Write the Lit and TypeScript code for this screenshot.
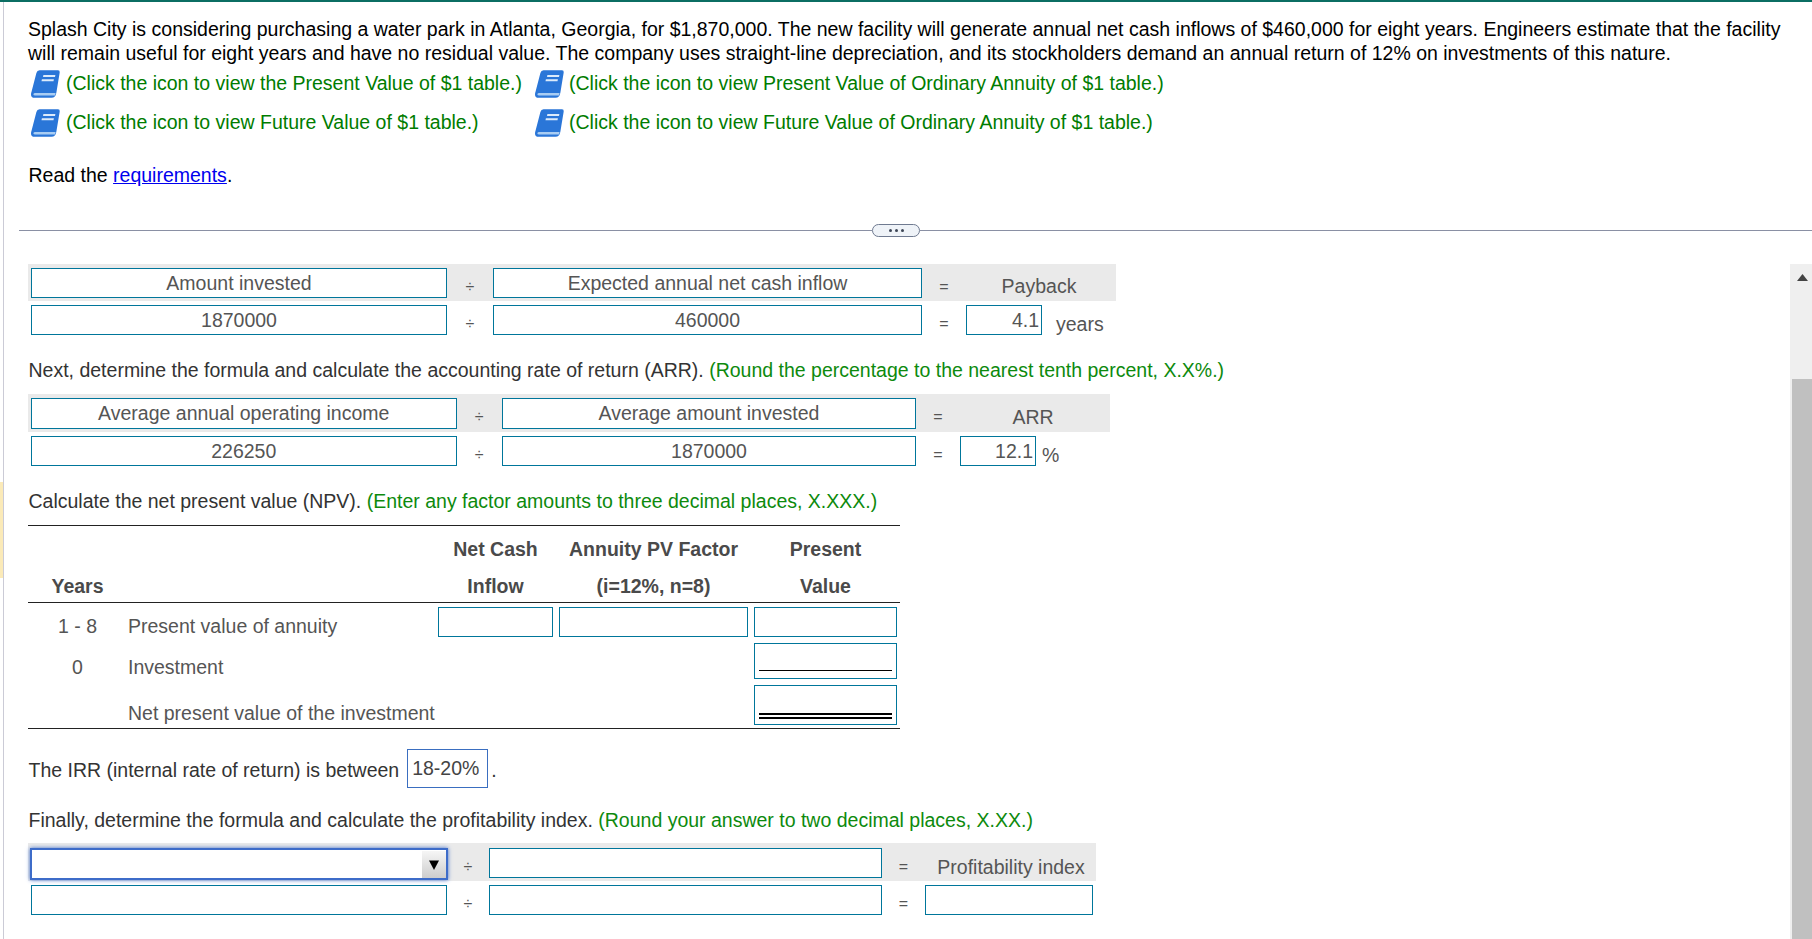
import { LitElement, html, css, svg } from "lit";
import { customElement } from "lit/decorators.js";

const bookIcon = svg`<svg class="book" viewBox="0 0 29 28" width="29" height="28" aria-hidden="true">
  <path d="M8.5 0.3 H27 Q29 0.3 28.7 2.4 L25.4 22.5 Q24.6 27.8 20.5 27.8 H3.6 Q0 27.8 0 24.4 Q0 23 0.6 21.6 L5.4 3 Q6.1 0.3 8.5 0.3 Z" fill="#2a76d8"/>
  <path d="M2.4 24.4 Q2.4 23 4.2 23 H24.6 L24 25.4 H4.2 Q2.4 25.4 2.4 24.4 Z" fill="#a9cdf3"/>
  <path d="M12.4 5 H24.4 L24 6.9 H12 Z M10.9 9.3 H22.9 L22.5 11.2 H10.5 Z" fill="#dcebfb"/>
</svg>`;

@customElement("app-root")
export class AppRoot extends LitElement {
  static styles = css`
    :host {
      display: block;
      position: relative;
      width: 1812px;
      height: 939px;
      overflow: hidden;
      background: #fff;
      font-family: "Liberation Sans", Arial, sans-serif;
      font-size: 19.5px;
      line-height: 24px;
      color: #222;
    }
    .topbar { height: 2px; background: #0b6e63; }
    .page {
      height: 937px;
      box-sizing: border-box;
      margin-left: 3px;
      border-left: 1px solid #cbcbd6;
      padding: 15px 0 0 24px;
    }
    .accent {
      position: absolute;
      left: 0;
      top: 482px;
      width: 3px;
      height: 96px;
      background: #fbeab8;
    }
    .intro { margin: 0; color: #000; width: 1770px; }
    .links {
      display: grid;
      grid-template-columns: 504px auto;
      row-gap: 11px;
      margin-top: 5px;
      padding-left: 3px;
      justify-content: start;
      color: #007c00;
    }
    .link { display: flex; align-items: center; gap: 6px; height: 28px; }
    .link span { padding-bottom: 2px; }
    .link.second { gap: 5px; }
    .book { flex: none; }
    .read { margin: 26px 0 0; padding-left: 0.5px; color: #000; }
    .read a { color: #0000ee; text-decoration: underline; }

    .divider { display: flex; align-items: center; margin: 37px 0 0 -9px; height: 13px; }
    .divider .line { flex: 1; height: 1px; background: #8a90a4; }
    .divider .line.lead { flex: none; width: 853px; }
    .pill {
      width: 48px;
      height: 13px;
      box-sizing: border-box;
      border: 1px solid #6f7a90;
      border-radius: 7px;
      background: #eff3f8;
      display: flex;
      align-items: center;
      justify-content: center;
      gap: 3px;
    }
    .pill i { width: 3px; height: 3px; border-radius: 50%; background: #3d4656; }

    .formula { color: #555; }
    .f1 { --cols: 416px 46px 429px 44px 1fr; width: 1088px; margin-top: 27px; }
    .f2 { --cols: 425.5px 45.5px 414px 44px 1fr; width: 1082px; margin-top: 12px; }
    .f3 { --cols: 416px 42px 393px 43px 168px; width: 1068px; margin-top: 11px; }
    .frow {
      display: grid;
      grid-template-columns: var(--cols);
      padding-left: 3px;
      box-sizing: border-box;
      align-items: start;
    }
    .frow.head { background: #eaeaea; padding-top: 4px; padding-bottom: 3px; }
    .f3 .frow.head { padding-top: 5px; padding-bottom: 1px; }
    .frow.vals { margin-top: 4px; }
    .f2 .frow.head .box { height: 31px; }
    .box {
      box-sizing: border-box;
      height: 30px;
      border: 1px solid #00769b;
      background: #fff;
      text-align: center;
      line-height: 28px;
      color: #555;
    }
    .box.num { text-align: right; padding-right: 2px; width: 76px; }
    .f3 .result { width: 168px; }
    .op { text-align: center; font-size: 16px; height: 30px; line-height: 38px; color: #555; }
    .rhead { text-align: center; height: 30px; line-height: 30px; padding: 4px 4px 0 0; box-sizing: border-box; }
    .f1 .rhead { padding-top: 3px; }
    .f3 .rhead { padding: 4px 0 0 4px; }
    .resultcell { display: flex; align-items: flex-start; }
    .unit { height: 30px; line-height: 38px; margin-left: 14px; }
    .unit.pct { margin-left: 6px; }

    .text { margin: 23px 0 0; padding-left: 0.5px; color: #333; }
    .text.calc { margin-top: 23px; }
    .tip { color: #0d8a0d; }

    .npv {
      --cols: 101px 309px 121px 195px 146px;
      width: 872px;
      margin-top: 12px;
      color: #555;
      border-top: 1px solid #222;
      border-bottom: 1px solid #222;
    }
    .npvhead, .npvbody { display: grid; grid-template-columns: var(--cols); }
    .npvhead {
      padding: 11px 0 4px;
      row-gap: 13px;
      border-bottom: 1px solid #222;
      font-weight: bold;
      color: #4a4a4a;
      text-align: center;
    }
    .npvhead .c1 { padding-right: 2px; }
    .npvhead .c3, .npvhead .c4 { padding-right: 6px; }
    .npvhead .c5 { padding-right: 3px; }
    .npvbody { padding: 4px 0 3px; row-gap: 6px; align-items: end; }
    .yr { text-align: center; padding-right: 2px; }
    .label { margin-left: -1px; }
    .first { transform: translateY(1px); }
    .npvbody .box.c3 { width: 115px; }
    .npvbody .box.c4 { width: 189px; }
    .npvbody .box.c5 { width: 143px; }
    .lined {
      display: flex;
      flex-direction: column;
      justify-content: flex-end;
      padding: 0 4px 7px;
    }
    .lined.single { height: 36px; }
    .lined.double { height: 40px; padding-bottom: 5px; }
    .lined span { display: block; }
    .lined.single span { border-bottom: 1px solid #000; }
    .lined.double span { border-bottom: 6px double #000; }
    .skip { grid-column: span 2; }

    .irr { display: flex; align-items: center; margin-top: 20px; padding-left: 0.5px; color: #333; height: 39px; }
    .irr > span { padding-top: 2px; }
    .irrbox {
      margin-left: 8px;
      height: 39px;
      box-sizing: border-box;
      width: 81px;
      padding: 0 0 0 4px;
      border: 1px solid #3a6ec0;
      line-height: 36px;
      color: #444;
    }
    .dot { margin-left: 3px; }
    .text.final { margin-top: 20px; }

    .select {
      box-sizing: border-box;
      width: 418px;
      height: 32px;
      margin-left: -1px;
      border: 2px solid #3d6cc9;
      box-shadow: 0 0 4px #3d6cc9;
      background: #fff;
      display: flex;
      justify-content: flex-end;
      align-items: stretch;
      padding: 1px 0 0;
    }
    .arrow {
      width: 24px;
      background: linear-gradient(#f6f6f6, #cdcdcd);
      display: flex;
      align-items: center;
      justify-content: center;
    }
    .arrow svg { display: block; }

    .scrollbar {
      position: absolute;
      right: 0;
      top: 264px;
      bottom: 0;
      width: 22px;
      background: #efefef;
    }
    .scrollbar .up {
      position: absolute;
      left: 7px;
      top: 10px;
      display: block;
    }
    .scrollbar .thumb {
      position: absolute;
      left: 2px;
      right: 0;
      top: 115px;
      bottom: 0;
      background: #c0c0c0;
    }
  `;

  private link(text: string, second = false) {
    return html`<div class="link ${second ? "second" : ""}">${bookIcon}<span>${text}</span></div>`;
  }

  private formula(
    cls: string,
    a: string,
    b: string,
    head: string,
    c: string,
    d: string,
    result: unknown,
    first?: unknown
  ) {
    return html`<div class="formula ${cls}">
      <div class="frow head">
        ${first ?? html`<div class="box">${a}</div>`}
        <div class="op">÷</div>
        <div class="box">${b}</div>
        <div class="op">=</div>
        <div class="rhead">${head}</div>
      </div>
      <div class="frow vals">
        <div class="box">${c}</div>
        <div class="op">÷</div>
        <div class="box">${d}</div>
        <div class="op">=</div>
        ${result}
      </div>
    </div>`;
  }

  render() {
    return html`
      <div class="topbar"></div>
      <div class="accent"></div>
      <div class="page">
        <p class="intro">
          Splash City is considering purchasing a water park in Atlanta, Georgia, for $1,870,000. The new facility will generate annual net cash inflows of $460,000 for eight years. Engineers estimate that the facility will remain useful for eight years and have no residual value. The company uses straight-line depreciation, and its stockholders demand an annual return of 12% on investments of this nature.
        </p>
        <div class="links">
          ${this.link("(Click the icon to view the Present Value of $1 table.)")}
          ${this.link("(Click the icon to view Present Value of Ordinary Annuity of $1 table.)", true)}
          ${this.link("(Click the icon to view Future Value of $1 table.)")}
          ${this.link("(Click the icon to view Future Value of Ordinary Annuity of $1 table.)", true)}
        </div>
        <p class="read">Read the <a href="#">requirements</a>.</p>

        <div class="divider">
          <div class="line lead"></div>
          <div class="pill"><i></i><i></i><i></i></div>
          <div class="line"></div>
        </div>

        ${this.formula(
          "f1",
          "Amount invested",
          "Expected annual net cash inflow",
          "Payback",
          "1870000",
          "460000",
          html`<div class="resultcell"><div class="box num">4.1</div><span class="unit">years</span></div>`
        )}

        <p class="text">Next, determine the formula and calculate the accounting rate of return (ARR). <span class="tip">(Round the percentage to the nearest tenth percent, X.X%.)</span></p>

        ${this.formula(
          "f2",
          "Average annual operating income",
          "Average amount invested",
          "ARR",
          "226250",
          "1870000",
          html`<div class="resultcell"><div class="box num">12.1</div><span class="unit pct">%</span></div>`
        )}

        <p class="text calc">Calculate the net present value (NPV). <span class="tip">(Enter any factor amounts to three decimal places, X.XXX.)</span></p>

        <div class="npv">
          <div class="npvhead">
            <div></div><div></div><div class="c3">Net Cash</div><div class="c4">Annuity PV Factor</div><div class="c5">Present</div>
            <div class="c1">Years</div><div></div><div class="c3">Inflow</div><div class="c4">(i=12%, n=8)</div><div class="c5">Value</div>
          </div>
          <div class="npvbody">
            <div class="yr first">1 - 8</div><div class="label first">Present value of annuity</div>
            <div class="box c3"></div><div class="box c4"></div><div class="box c5"></div>
            <div class="yr">0</div><div class="label">Investment</div><div class="skip"></div>
            <div class="box c5 lined single"><span></span></div>
            <div></div><div class="label">Net present value of the investment</div><div class="skip"></div>
            <div class="box c5 lined double"><span></span></div>
          </div>
        </div>

        <div class="irr">
          <span>The IRR (internal rate of return) is between</span>
          <div class="irrbox">18-20%</div>
          <span class="dot">.</span>
        </div>

        <p class="text final">Finally, determine the formula and calculate the profitability index. <span class="tip">(Round your answer to two decimal places, X.XX.)</span></p>

        ${this.formula(
          "f3",
          "",
          "",
          "Profitability index",
          "",
          "",
          html`<div class="box result"></div>`,
          html`<div class="select"><div class="arrow"><svg width="10" height="10" viewBox="0 0 10 10"><path d="M0 0.5 H10 L5 10 Z" fill="#000"/></svg></div></div>`
        )}
      </div>
      <div class="scrollbar">
        <svg class="up" width="11" height="7" viewBox="0 0 11 7"><path d="M5.5 0 L11 7 H0 Z" fill="#444"/></svg>
        <div class="thumb"></div>
      </div>
    `;
  }
}
